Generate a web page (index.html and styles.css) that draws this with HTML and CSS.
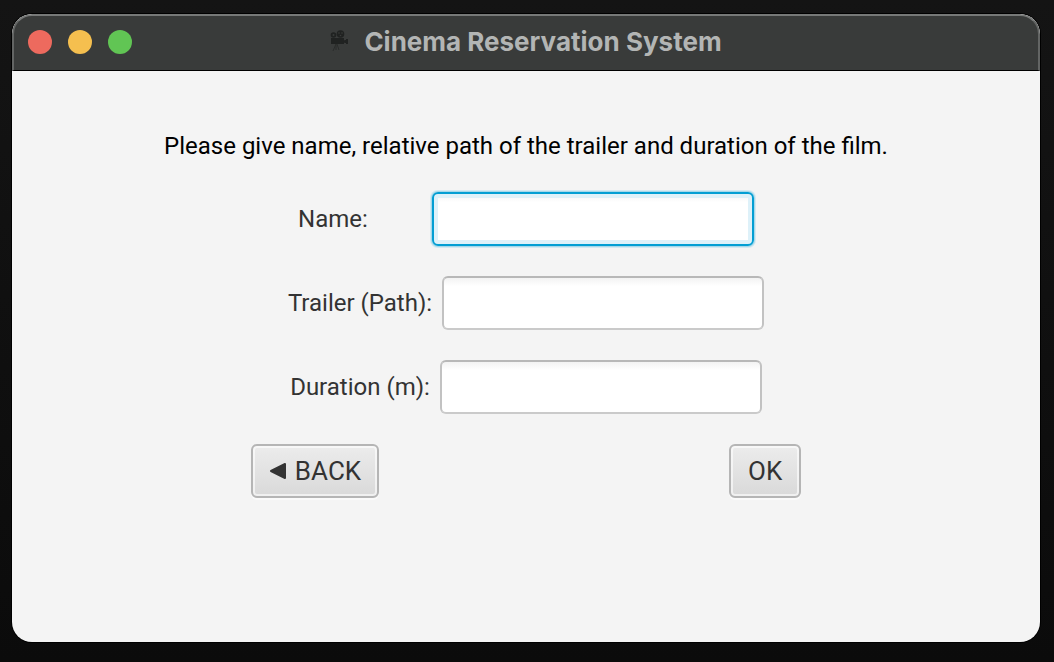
FILE: index.html
```html
<!DOCTYPE html>
<html lang="en">
<head>
<meta charset="utf-8">
<title>Cinema Reservation System</title>
<link rel="stylesheet" href="styles.css">
</head>
<body>
<div class="window">
  <header class="titlebar">
    <div class="lights">
      <button class="light close" type="button" aria-label="Close"></button>
      <button class="light minimize" type="button" aria-label="Minimize"></button>
      <button class="light zoom" type="button" aria-label="Zoom"></button>
    </div>
    <h1 class="title">
      <svg class="camera" viewBox="0 0 18 24" aria-hidden="true">
        <circle cx="3.500" cy="5" r="2.800"/>
        <circle cx="10.500" cy="4" r="3.800"/>
        <path d="M1 8h13v2.500l1-.5h1V9h2v5h-2v-1h-1l-1-.5V14H1z"/>
        <path class="legs" d="M6 14l-3 7M6 14v6M7 14l2 6"/>
        <g class="holes"><circle cx="3.500" cy="5" r="1"/><circle cx="9" cy="3" r=".8"/><circle cx="12" cy="3" r=".8"/><circle cx="10.500" cy="5.500" r=".8"/></g>
      </svg>
      <span>Cinema Reservation System</span>
    </h1>
  </header>
  <form class="content">
    <p class="message">Please give name, relative path of the trailer and duration of the film.</p>
    <div class="row row-wide">
      <label for="name">Name:</label>
      <input class="field" id="name" type="text" autofocus>
    </div>
    <div class="row">
      <label for="trailer">Trailer (Path):</label>
      <input class="field" id="trailer" type="text">
    </div>
    <div class="row">
      <label for="duration">Duration (m):</label>
      <input class="field" id="duration" type="text">
    </div>
    <div class="row actions">
      <button class="button" type="button">
        <svg class="arrow" viewBox="0 0 18 18" aria-hidden="true"><path d="M2 9L16 2v14z"/></svg>
        <span>BACK</span>
      </button>
      <button class="button" type="button">OK</button>
    </div>
  </form>
</div>
</body>
</html>
```
FILE: styles.css
```css
* {
  box-sizing: border-box;
}

body {
  margin: 0;
  min-height: 100vh;
  padding: 14px 14px 20px 12px;
  display: flex;
  background: linear-gradient(#141414, #0b0b0b);
  font-family: Roboto, "Liberation Sans", sans-serif;
  font-size: 24px;
  line-height: 32px;
  color: #333;
}

.window {
  flex: 1;
  display: flex;
  flex-direction: column;
  overflow: hidden;
  border-radius: 20px;
  background: #f4f4f4;
  box-shadow: 0 0 0 1px #000;
}

.titlebar {
  display: grid;
  grid-template-columns: 1fr auto 1fr;
  align-items: center;
  height: 57px;
  padding: 0 14px 2px;
  border: 2px solid #636564;
  border-top-color: #777978;
  border-bottom: 1px solid #000;
  border-radius: 20px 20px 0 0;
  background: #393b3a;
}

.lights {
  display: flex;
  gap: 16px;
}

.light {
  width: 24px;
  height: 24px;
  padding: 0;
  border: 0;
  border-radius: 50%;
}

.close {
  background: #ed6a5e;
}

.minimize {
  background: #f5bf4f;
}

.zoom {
  background: #61c554;
}

.title {
  display: flex;
  align-items: center;
  gap: 16px;
  margin: 0;
  font-family: Inter, "Liberation Sans", sans-serif;
  font-size: 26px;
  font-weight: 700;
  color: #b3b5b4;
}

.camera {
  width: 18px;
  height: 24px;
  fill: #202221;
}

.legs {
  fill: none;
  stroke: #2a2c2b;
}

.holes {
  fill: #393b3a;
}

.content {
  display: flex;
  flex-direction: column;
  align-items: center;
  gap: 30px;
  padding: 59px 20px 30px;
}

.message {
  margin: 0;
  color: #000;
}

.row {
  display: flex;
  align-items: center;
  gap: 10px;
}

.row-wide {
  gap: 64px;
}

.actions {
  gap: 350px;
}

.field {
  width: 322px;
  height: 54px;
  padding: 8px 14px;
  border: 2px solid #c2c2c2;
  border-top-color: #b8b8b8;
  border-bottom-color: #cacaca;
  border-radius: 6px;
  background: linear-gradient(#f3f3f3, #fff 8px);
  font: inherit;
  color: #333;
}

.field:focus {
  border-color: #039ed3;
  outline: 0;
  box-shadow: 0 0 0 1px #a5d8ea, 0 0 0 2px #d3e9f1, inset 0 0 0 4px #def1f9;
  caret-color: transparent;
}

.button {
  display: flex;
  align-items: center;
  justify-content: center;
  gap: 8px;
  min-width: 72px;
  height: 54px;
  padding: 0 16px;
  border: 2px solid #b5b5b5;
  border-radius: 6px;
  background: linear-gradient(#ececec, #d9d9d9);
  box-shadow: inset 0 0 0 2px rgba(255, 255, 255, 0.6), 0 2px 0 #fafafa;
  font: inherit;
  font-size: 26px;
  color: #333;
}

.arrow {
  width: 18px;
  height: 18px;
  fill: #333;
  stroke: #333;
  stroke-width: 2;
  stroke-linejoin: round;
}
```
